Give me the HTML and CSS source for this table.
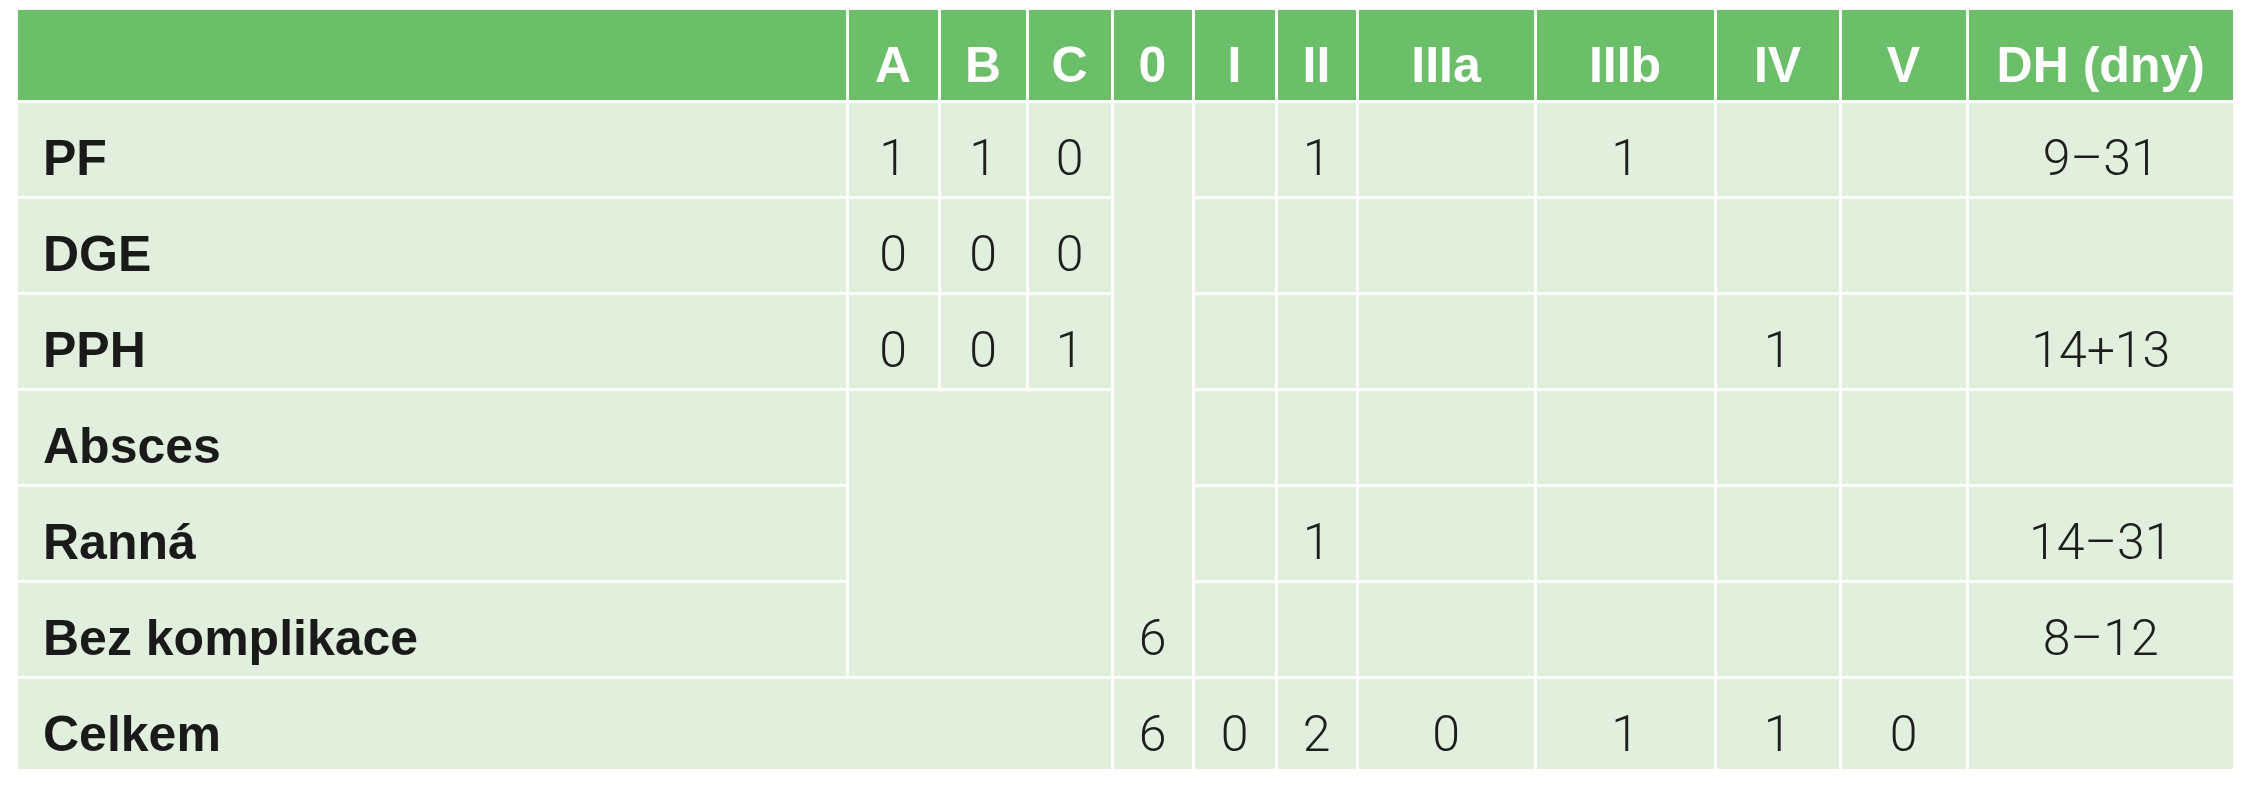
FILE: index.html
```html
<!DOCTYPE html>
<html lang="cs">
<head>
<meta charset="utf-8">
<title>Tabulka komplikací</title>
<link rel="stylesheet" href="styles.css">
</head>
<body>
<div class="page">
<table class="grid">
  <colgroup>
    <col class="c-label"><col class="c-a"><col class="c-b"><col class="c-c"><col class="c-0"><col class="c-i"><col class="c-ii"><col class="c-iiia"><col class="c-iiib"><col class="c-iv"><col class="c-v"><col class="c-dh">
  </colgroup>
  <thead>
    <tr>
      <th></th><th>A</th><th>B</th><th>C</th><th>0</th><th>I</th><th>II</th><th>IIIa</th><th>IIIb</th><th>IV</th><th>V</th><th>DH (dny)</th>
    </tr>
  </thead>
  <tbody>
    <tr>
      <td class="label">PF</td><td>1</td><td>1</td><td>0</td><td class="merged-bottom" rowspan="6">6</td><td></td><td>1</td><td></td><td>1</td><td></td><td></td><td>9–31</td>
    </tr>
    <tr>
      <td class="label">DGE</td><td>0</td><td>0</td><td>0</td><td></td><td></td><td></td><td></td><td></td><td></td><td></td>
    </tr>
    <tr>
      <td class="label">PPH</td><td>0</td><td>0</td><td>1</td><td></td><td></td><td></td><td></td><td>1</td><td></td><td>14+13</td>
    </tr>
    <tr>
      <td class="label">Absces</td><td colspan="3" rowspan="3"></td><td></td><td></td><td></td><td></td><td></td><td></td><td></td>
    </tr>
    <tr>
      <td class="label">Ranná</td><td></td><td>1</td><td></td><td></td><td></td><td></td><td>14–31</td>
    </tr>
    <tr>
      <td class="label">Bez komplikace</td><td></td><td></td><td></td><td></td><td></td><td></td><td>8–12</td>
    </tr>
    <tr class="total">
      <td class="label" colspan="4">Celkem</td><td>6</td><td>0</td><td>2</td><td>0</td><td>1</td><td>1</td><td>0</td><td></td>
    </tr>
  </tbody>
</table>
</div>
</body>
</html>
```
FILE: styles.css
```css
html, body {
  margin: 0;
  padding: 0;
  background: #ffffff;
}

.page {
  padding: 10px 0 0 18px;
}

.grid {
  width: 2215px;
  table-layout: fixed;
  border-collapse: collapse;
  border-style: hidden;
}

.c-label { width: 829px; }
.c-a { width: 92px; }
.c-b { width: 88px; }
.c-c { width: 85px; }
.c-0 { width: 81px; }
.c-i { width: 83px; }
.c-ii { width: 81px; }
.c-iiia { width: 178px; }
.c-iiib { width: 180px; }
.c-iv { width: 125px; }
.c-v { width: 127px; }
.c-dh { width: 266px; }

.grid th,
.grid td {
  border: 3px solid #ffffff;
  text-align: center;
  font-size: 50px;
  line-height: 50px;
  white-space: nowrap;
}

.grid th {
  background: #6bbf69;
  color: #ffffff;
  font-family: "Liberation Sans", Arial, sans-serif;
  font-weight: 700;
  padding: 30px 0 10px;
  vertical-align: top;
}

.grid td {
  background: #e0f0dc;
  color: #1e1e1e;
  font-family: Roboto, "Liberation Sans", sans-serif;
  font-weight: 300;
  padding: 30px 0 13px;
  vertical-align: top;
}

.grid .total td {
  padding-bottom: 10px;
}

.grid td.label {
  text-align: left;
  padding-left: 25px;
  font-family: "Liberation Sans", Arial, sans-serif;
  font-weight: 700;
  color: #1a1a1a;
}

.grid td.merged-bottom {
  vertical-align: bottom;
}
```
